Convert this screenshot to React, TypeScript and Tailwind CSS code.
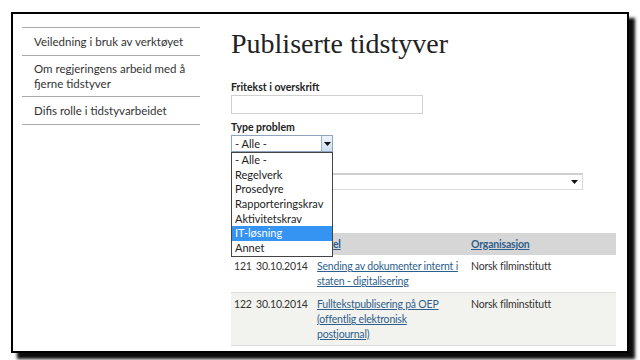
import React from "react";

const sans = { fontFamily: "Lato, 'Open Sans', sans-serif" };

function Arrow() {
  return (
    <svg width="7" height="4" viewBox="0 0 7 4">
      <path d="M0 0 H7 L3.5 4 Z" fill="#111" />
    </svg>
  );
}

export default function App() {
  const items = ["- Alle -", "Regelverk", "Prosedyre", "Rapporteringskrav", "Aktivitetskrav", "IT-løsning", "Annet"];
  return (
    <div className="w-[640px] h-[360px] bg-white overflow-hidden" style={sans}>
      <div className="ml-[11px] mt-[12px] w-[618px] h-[341px] border-2 border-black bg-white shadow-[6px_6px_3px_rgba(0,0,0,0.95)] flex items-start text-[#333]">
        {/* Sidebar */}
        <div className="ml-[9px] pt-[13px] w-[178px] shrink-0">
          <ul className="border-t border-[#a8a8a8] text-[11.5px] leading-[15px] text-[#333]">
            <li className="border-b border-[#a8a8a8] py-[6px] pl-[12px]">Veiledning i bruk av verktøyet</li>
            <li className="border-b border-[#a8a8a8] py-[5px] pl-[12px]">Om regjeringens arbeid med å<br />fjerne tidstyver</li>
            <li className="border-b border-[#a8a8a8] py-[6px] pl-[12px]">Difis rolle i tidstyvarbeidet</li>
          </ul>
        </div>

        {/* Content */}
        <div className="ml-[31px] pt-[14px] w-[385px] shrink-0">
          <h1 className="text-[28px] leading-[32px] text-[#222]" style={{ fontFamily: "'Liberation Serif', serif" }}>
            Publiserte tidstyver
          </h1>
          <label className="block mt-[21px] text-[10.5px] leading-[13px] font-bold text-[#222]">Fritekst i overskrift</label>
          <div className="mt-[1px] w-[192px] h-[19px] border border-[#d0d0d0] bg-white" />
          <label className="block mt-[7px] text-[10.5px] leading-[13px] font-bold text-[#222]">Type problem</label>
          <div className="relative mt-[1px] w-[102px] h-[17px] z-10">
            <div className="w-full h-full border border-[#8fa4bd] bg-white flex items-center">
              <span className="flex-1 pl-[3px] text-[11px] leading-[15px] text-[#222]">- Alle -</span>
              <div className="w-[11px] h-full border-l border-[#9db3cc] bg-gradient-to-b from-[#eef4fb] to-[#cfdef0] flex items-center justify-center">
                <Arrow />
              </div>
            </div>
            <ul className="absolute left-0 top-full w-[102px] border border-[#444] bg-white text-[11px] text-[#222]">
              {items.map((it) => (
                <li
                  key={it}
                  className={
                    "h-[14.7px] leading-[14.7px] pl-[3px] " +
                    (it === "IT-løsning" ? "bg-[#3593f1] text-white" : "")
                  }
                >
                  {it}
                </li>
              ))}
            </ul>
          </div>
          <div className="mt-[21px] w-[352px] h-[17px] border border-[#dcdcdc] border-t-2 border-t-[#cfcfcf] bg-white flex items-center justify-end pr-[4px]">
            <Arrow />
          </div>

          <table className="mt-[43px] w-[385px] table-fixed border-collapse text-[10.5px] leading-[15px] tracking-[-0.2px] text-[#333]">
            <colgroup>
              <col className="w-[22px]" />
              <col className="w-[61px]" />
              <col className="w-[154px]" />
              <col className="w-[148px]" />
            </colgroup>
            <thead>
              <tr className="bg-[#d6d6d6] h-[22px]">
                <th className="px-[3px]" />
                <th className="px-[3px]" />
                <th className="px-[3px] text-left font-bold"><span className="text-[#2e5f8c] underline">Tittel</span></th>
                <th className="px-[3px] text-left font-bold"><span className="text-[#2e5f8c] underline">Organisasjon</span></th>
              </tr>
            </thead>
            <tbody>
              <tr className="bg-white border-b border-[#dcdcdc] align-top">
                <td className="pl-[3px] pr-0 pt-[4px] pb-[3px] whitespace-nowrap">121</td>
                <td className="pl-[3px] pr-0 pt-[4px] pb-[3px] whitespace-nowrap">30.10.2014</td>
                <td className="pl-[3px] pr-0 pt-[4px] pb-[3px] whitespace-nowrap">
                  <a className="text-[#2e5f8c] underline">Sending av dokumenter internt i<br />staten - digitalisering</a>
                </td>
                <td className="px-[3px] pt-[4px] pb-[3px]">Norsk filminstitutt</td>
              </tr>
              <tr className="bg-[#f2f2ee] border-b border-[#dcdcdc] align-top">
                <td className="pl-[3px] pr-0 pt-[4px] pb-[3px] whitespace-nowrap">122</td>
                <td className="pl-[3px] pr-0 pt-[4px] pb-[3px] whitespace-nowrap">30.10.2014</td>
                <td className="pl-[3px] pr-0 pt-[4px] pb-[3px] whitespace-nowrap">
                  <a className="text-[#2e5f8c] underline">Fulltekstpublisering på OEP<br />(offentlig elektronisk<br />postjournal)</a>
                </td>
                <td className="px-[3px] pt-[4px] pb-[3px]">Norsk filminstitutt</td>
              </tr>
            </tbody>
          </table>
        </div>
      </div>
    </div>
  );
}
